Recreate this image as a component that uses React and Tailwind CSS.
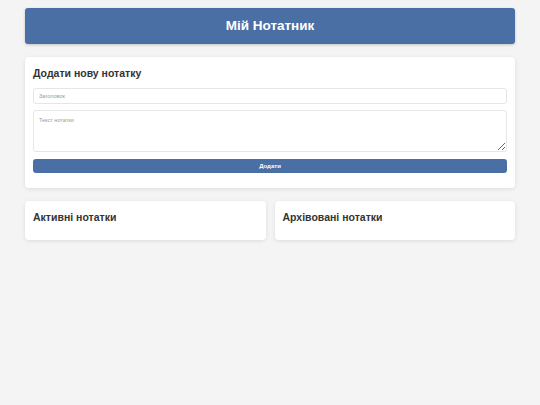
export default function App() {
  return (
    <div className="min-h-screen bg-[#f4f4f4] font-['Liberation_Sans',Arial,sans-serif] text-[#333]">
      <div className="mx-auto w-[490px] pt-2">
        <header className="flex h-9 items-center justify-center rounded-[3px] bg-[#4a6fa5] shadow-[0_1px_3px_rgba(0,0,0,0.2)]">
          <h1 className="text-[13.5px] font-bold leading-none text-white">Мій Нотатник</h1>
        </header>

        <section className="mt-[13px] rounded-[4px] bg-white px-2 pb-[15px] pt-[9px] shadow-[0_1px_4px_rgba(0,0,0,0.1)]">
          <h2 className="text-[10.5px] font-bold leading-[14px]">Додати нову нотатку</h2>
          <form className="mt-2 flex flex-col">
            <input
              type="text"
              placeholder="Заголовок"
              className="h-4 rounded-[3px] border border-[#e6e6e6] px-[5px] text-[5.5px] outline-none placeholder:text-[#999]"
            />
            <textarea
              placeholder="Текст нотатки"
              className="mt-[6px] h-[42px] rounded-[3px] border border-[#e6e6e6] px-[5px] py-[5px] text-[5.5px] outline-none placeholder:text-[#999]"
            />
            <button
              type="button"
              className="mt-[7px] h-[14px] rounded-[3px] bg-[#4a6fa5] text-[6px] font-bold leading-none text-white"
            >
              Додати
            </button>
          </form>
        </section>

        <div className="mt-[13px] grid grid-cols-2 gap-[9px]">
          <section className="rounded-[4px] bg-white px-2 pb-4 pt-[9px] shadow-[0_1px_4px_rgba(0,0,0,0.1)]">
            <h2 className="text-[10.5px] font-bold leading-[14px]">Активні нотатки</h2>
          </section>
          <section className="rounded-[4px] bg-white px-2 pb-4 pt-[9px] shadow-[0_1px_4px_rgba(0,0,0,0.1)]">
            <h2 className="text-[10.5px] font-bold leading-[14px]">Архівовані нотатки</h2>
          </section>
        </div>
      </div>
    </div>
  );
}
